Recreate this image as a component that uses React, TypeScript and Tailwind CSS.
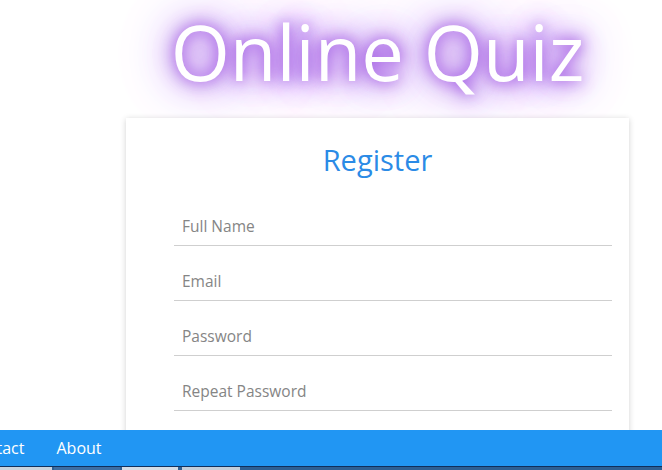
import React from 'react';

const fields = ['Full Name', 'Email', 'Password', 'Repeat Password'];

const App: React.FC = () => {
  return (
    <div className="relative w-[662px] h-[470px] overflow-hidden bg-white font-['Open_Sans',sans-serif]">
      <div className="ml-[126px] w-[503px] flex flex-col items-center">
        <h1 className="mt-[2px] h-[116px] text-[76px] leading-[100px] text-white whitespace-nowrap [text-shadow:0_0_14px_#9a4fe0,0_0_24px_#a45ee4,0_0_40px_#b47ce8,0_0_60px_#c9a2f0,0_0_80px_#dcc4f5]">
          Online Quiz
        </h1>
        <div className="w-full h-[400px] bg-white shadow-[0_1px_6px_rgba(0,0,0,0.18)] flex flex-col items-center">
          <h2 className="mt-[20px] text-[29px] leading-[44px] text-[#2b8be6]">Register</h2>
          <form className="self-start mt-[31px] ml-[48px] w-[438px] flex flex-col gap-[22px]">
            {fields.map((f) => (
              <input
                key={f}
                placeholder={f}
                className="h-[33px] w-full border-b border-[#cfcfcf] px-[8px] pb-[6px] text-[15.5px] placeholder:text-[#858585] outline-none"
              />
            ))}
          </form>
        </div>
      </div>

      <nav className="absolute left-0 right-0 top-[430px] h-[36px] bg-[#2196f3] flex items-center text-white text-[16px]">
        <span className="-ml-[33px]">Contact</span>
        <span className="ml-[32px]">About</span>
      </nav>
      <div className="absolute left-0 right-0 top-[466px] h-[4px] bg-[#2d5f93] border-t border-[#0f2f5c] flex">
        <div className="w-[52px] bg-[#c9d3de]" />
        <div className="w-[66px] ml-[2px] bg-[#3d6ea3]" />
        <div className="w-[56px] ml-[2px] bg-[#d5dde6]" />
        <div className="w-[58px] ml-[4px] bg-[#c4ceda]" />
      </div>
    </div>
  );
};

export default App;
